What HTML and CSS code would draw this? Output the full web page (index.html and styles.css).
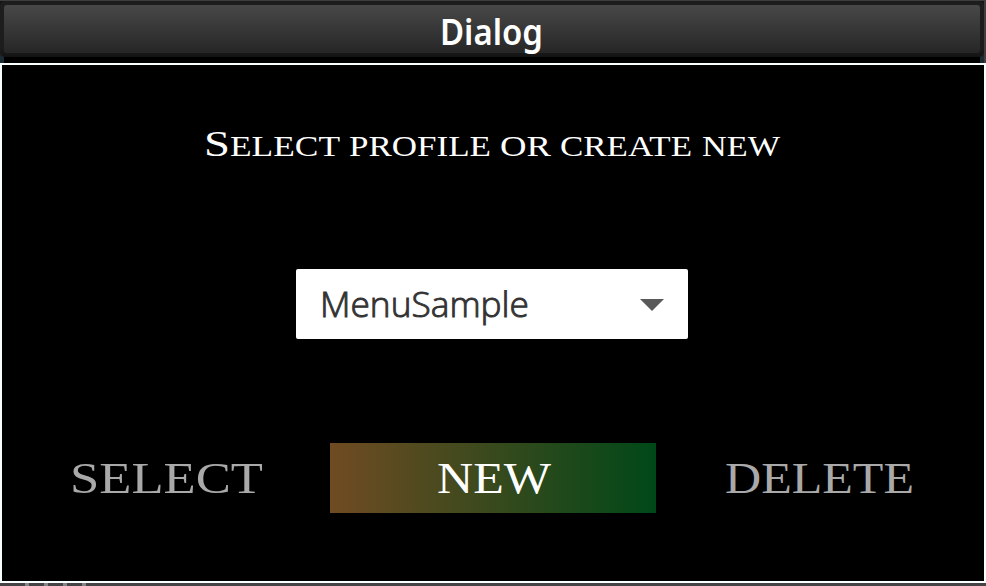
FILE: index.html
```html
<!DOCTYPE html>
<html lang="en">
<head>
<meta charset="utf-8">
<title>Dialog</title>
<link rel="stylesheet" href="styles.css">
</head>
<body>
<header class="titlebar">
  <div class="frame"><div class="face">
    <svg class="title" width="104" height="56" viewBox="0 0 104 56"><text x="0" y="39.5" textLength="103" lengthAdjust="spacingAndGlyphs">Dialog</text></svg>
  </div></div>
</header>
<main class="panel">
  <svg class="message" width="580" height="40" viewBox="0 0 580 40">
    <text class="initial" x="1" y="31" textLength="26" lengthAdjust="spacingAndGlyphs">S</text>
    <text x="27" y="31" textLength="110" lengthAdjust="spacingAndGlyphs">ELECT</text>
    <text x="146" y="31" textLength="142" lengthAdjust="spacingAndGlyphs">PROFILE</text>
    <text x="297" y="31" textLength="51" lengthAdjust="spacingAndGlyphs">OR</text>
    <text x="357" y="31" textLength="132" lengthAdjust="spacingAndGlyphs">CREATE</text>
    <text x="499" y="31" textLength="78" lengthAdjust="spacingAndGlyphs">NEW</text>
  </svg>
  <div class="select">
    <svg width="220" height="70" viewBox="0 0 220 70"><text x="4" y="48" textLength="209" lengthAdjust="spacingAndGlyphs">MenuSample</text></svg>
    <span class="arrow"></span>
  </div>
  <div class="actions">
    <div class="action"><svg width="326" height="70" viewBox="0 0 326 70"><text x="66" y="50" textLength="193" lengthAdjust="spacingAndGlyphs">SELECT</text></svg></div>
    <div class="action active"><svg width="326" height="70" viewBox="0 0 326 70"><text x="107" y="50" textLength="114" lengthAdjust="spacingAndGlyphs">NEW</text></svg></div>
    <div class="action"><svg width="326" height="70" viewBox="0 0 326 70"><text x="69" y="50" textLength="189" lengthAdjust="spacingAndGlyphs">DELETE</text></svg></div>
  </div>
</main>
<footer class="edge"><i></i><i></i><i></i><i></i></footer>
</body>
</html>
```
FILE: styles.css
```css
* { box-sizing: border-box; }
body {
  margin: 0;
  width: 986px;
  height: 586px;
  display: flex;
  flex-direction: column;
  overflow: hidden;
  background: #000;
}
svg { display: block; flex: none; overflow: visible; }
.titlebar {
  height: 63px;
  border-top: 1px solid #3d3d3d;
  border-right: 2px solid #45403e;
  background:
    linear-gradient(#101416 75%, #1b2a33 90%) left / 4px 100% no-repeat,
    linear-gradient(#101416 75%, #1b2a33 90%) right / 4px 100% no-repeat,
    #000;
}
.frame {
  height: 56px;
  padding: 4px;
  border-radius: 5px;
  background: linear-gradient(#1d1d1d 85%, #131313);
}
.face {
  height: 48px;
  display: flex;
  justify-content: center;
  border-radius: 3px;
  background: linear-gradient(#484848, #262626);
}
.title {
  font: 600 36px "Noto Sans", sans-serif;
  fill: #fff;
}
.panel {
  height: 520px;
  display: flex;
  flex-direction: column;
  align-items: center;
  border: 2px solid #f8ffff;
  background: #000;
}
.message {
  margin: 60px 0 104px;
  font: 30px "Liberation Serif", serif;
  fill: #fff;
}
.initial { font-size: 36px; }
.select {
  width: 392px;
  height: 70px;
  margin-left: -2px;
  padding: 0 24px 0 20px;
  display: flex;
  align-items: center;
  justify-content: space-between;
  border-radius: 2px;
  background: #fff;
  font: 300 35px "Open Sans", sans-serif;
  fill: #333;
  stroke: #333;
  stroke-width: 0.9px;
}
.arrow {
  width: 24px;
  height: 12px;
  margin-top: 2px;
  background: #595959;
  clip-path: polygon(0 0, 100% 0, 50% 100%);
}
.actions {
  display: flex;
  margin-top: 104px;
  font: 45px "Liberation Serif", serif;
  fill: #a9a9a9;
}
.active {
  background: linear-gradient(90deg, #704b22, #004818);
  fill: #fff;
}
.edge {
  height: 3px;
  display: flex;
  gap: 15px;
  padding-left: 25px;
  background: #464346;
}
.edge i {
  width: 4px;
  background: #858585;
}
```
